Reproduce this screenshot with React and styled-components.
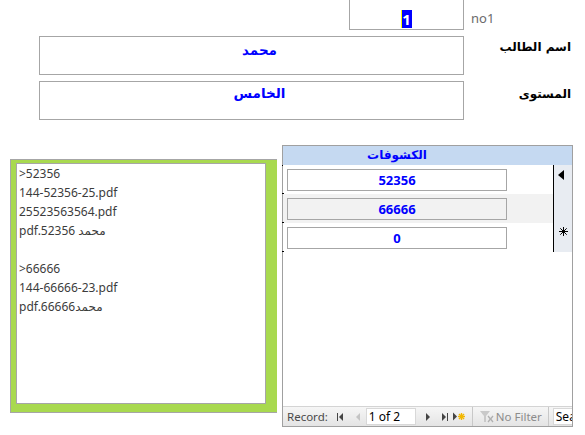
import React from "react";
import styled, { createGlobalStyle } from "styled-components";

const GlobalStyle = createGlobalStyle`
    html, body {
        margin: 0;
        padding: 0;
        background: #ffffff;
    }
`;

const Page = styled.div`
    width: 585px;
    height: 435px;
    overflow: hidden;
    background: #ffffff;
    font-family: "Noto Sans", "DejaVu Sans", sans-serif;
    display: flex;
    flex-direction: column;
`;

const FieldRow = styled.div`
    display: flex;
    align-items: flex-start;
    padding-left: ${props => props.$left}px;
    margin-top: ${props => props.$top}px;
`;

const FieldBox = styled.div`
    box-sizing: border-box;
    width: ${props => props.$width}px;
    height: ${props => props.$height}px;
    border: 1px solid #a6a6a6;
    text-align: center;
    padding-top: ${props => props.$pad}px;
    padding-left: ${props => props.$shift || 0}px;
    font-family: "DejaVu Sans", sans-serif;
    font-weight: bold;
    font-size: 13.5px;
    line-height: 18px;
    color: #0000ff;
`;

const Selected = styled.span`
    display: inline-block;
    background: #0000ff;
    color: #ffffff;
    border-left: 1px solid #ffff00;
    padding: 0 1px 0 0;
    font-family: "Noto Sans", sans-serif;
    font-weight: bold;
    font-size: 15px;
    line-height: 18px;
`;

const Caption = styled.div`
    margin-top: ${props => props.$top}px;
    margin-left: 7px;
    font-size: 13px;
    line-height: 16px;
    color: #6b6b6b;
`;

const ArabicLabel = styled.div`
    flex: 1;
    text-align: right;
    padding-right: 14px;
    margin-top: ${props => props.$top}px;
    font-family: "DejaVu Sans", sans-serif;
    font-weight: bold;
    font-size: 12px;
    line-height: 16px;
    color: #000000;
    direction: rtl;
`;

const Lower = styled.div`
    display: flex;
    align-items: flex-start;
    margin-top: 25px;
`;

const Memo = styled.div`
    box-sizing: border-box;
    margin-left: 10px;
    margin-top: 14px;
    width: 267px;
    height: 254px;
    border: 1px solid #a6a6a6;
    border-right: none;
    background: #a8d94f;
    padding: 3px 11px 8px 5px;
`;

const MemoInner = styled.div`
    box-sizing: border-box;
    height: 100%;
    background: #ffffff;
    border: 1px solid #a6a6a6;
    padding: 0 2px;
    font-size: 12px;
    line-height: 19px;
    color: #3c3c3c;
    white-space: pre;
`;

const Subform = styled.div`
    box-sizing: border-box;
    margin-left: 5px;
    width: 291px;
    height: 282px;
    border: 1px solid #a0a0a0;
    display: flex;
    flex-direction: column;
`;

const SubHeader = styled.div`
    height: 19px;
    background: #c5d9f1;
    display: flex;
`;

const HeaderTitle = styled.div`
    width: 220px;
    margin-left: 4px;
    text-align: center;
    font-family: "DejaVu Sans", sans-serif;
    font-weight: bold;
    font-size: 12px;
    line-height: 18px;
    color: #0000ff;
    direction: rtl;
`;

const SubBody = styled.div`
    display: flex;
    align-items: flex-start;
`;

const RowList = styled.div`
    flex: 1;
    position: relative;
    &::before {
        content: "";
        position: absolute;
        left: -1px;
        top: 0;
        width: 19px;
        height: 1px;
        background: #000000;
    }
`;

const Row = styled.div`
    position: relative;
    height: 29px;
    background: ${props => (props.$shade ? "#f2f2f2" : "#ffffff")};
    &::after {
        content: "";
        position: absolute;
        left: -1px;
        bottom: 0;
        width: 2px;
        height: 1px;
        background: #000000;
    }
`;

const Cell = styled.div`
    box-sizing: border-box;
    margin-left: 4px;
    position: relative;
    top: 4px;
    width: 220px;
    height: 22px;
    border: 1px solid #a6a6a6;
    text-align: center;
    font-weight: bold;
    font-size: 13px;
    line-height: 20px;
    color: #0000ff;
`;

const Selector = styled.div`
    width: 18px;
    border-left: 1px solid #000000;
    background: #e8ecf2;
`;

const SelectorCell = styled.div`
    height: 29px;
    display: flex;
    align-items: flex-start;
    padding: ${props => props.$pad};
    box-sizing: border-box;
`;

const Filler = styled.div`
    flex: 1;
`;

const NavBar = styled.div`
    height: 19px;
    border-top: 1px solid #d4d4d4;
    background: linear-gradient(#f6f6f6, #e4e4e4);
    display: flex;
    align-items: center;
    padding-left: 4px;
    font-size: 11.5px;
    color: #4a4a4a;
    overflow: hidden;
`;

const NavText = styled.span`
    color: ${props => props.$color || "#4a4a4a"};
    margin-left: ${props => props.$left || 0}px;
    white-space: nowrap;
`;

const NavIcon = styled.svg`
    flex: none;
    margin-left: ${props => props.$left}px;
`;

const NavInput = styled.div`
    box-sizing: border-box;
    flex: none;
    width: ${props => props.$width}px;
    height: 17px;
    margin-left: ${props => props.$left}px;
    background: #ffffff;
    border: 1px solid #d8d8d8;
    padding-left: 2px;
    font-size: 12px;
    line-height: 15px;
    color: #000000;
    overflow: hidden;
    white-space: nowrap;
`;

const NavDivider = styled.div`
    flex: none;
    width: 1px;
    height: 19px;
    margin-left: ${props => props.$left}px;
    background: #c8c8c8;
`;

const memoText = `>52356
144-52356-25.pdf
25523563564.pdf
pdf.52356 محمد

>66666
144-66666-23.pdf
pdf.66666محمد`;

const records = [
    { id: "52356", shade: false },
    { id: "66666", shade: true },
    { id: "0", shade: false },
];

export default function App() {
    return (
        <Page>
            <GlobalStyle />
            <FieldRow $left={349} $top={-1}>
                <FieldBox $width={115} $height={31} $pad={10}>
                    <Selected>1</Selected>
                </FieldBox>
                <Caption $top={11}>no1</Caption>
            </FieldRow>
            <FieldRow $left={39} $top={6}>
                <FieldBox $width={425} $height={39} $pad={4} $shift={16}>
                    محمد
                </FieldBox>
                <ArabicLabel $top={3}>اسم الطالب</ArabicLabel>
            </FieldRow>
            <FieldRow $left={39} $top={6}>
                <FieldBox $width={425} $height={39} $pad={2} $shift={16}>
                    الخامس
                </FieldBox>
                <ArabicLabel $top={5}>المستوى</ArabicLabel>
            </FieldRow>

            <Lower>
                <Memo>
                    <MemoInner>{memoText}</MemoInner>
                </Memo>
                <Subform>
                    <SubHeader>
                        <HeaderTitle>الكشوفات</HeaderTitle>
                    </SubHeader>
                    <SubBody>
                        <RowList>
                            {records.map(r => (
                                <Row key={r.id} $shade={r.shade}>
                                    <Cell>{r.id}</Cell>
                                </Row>
                            ))}
                        </RowList>
                        <Selector>
                            <SelectorCell $pad="5px 0 0 4px">
                                <svg width="6" height="10" viewBox="0 0 6 10">
                                    <polygon points="6,0 6,10 0,5" fill="#000" />
                                </svg>
                            </SelectorCell>
                            <SelectorCell $pad="0" />
                            <SelectorCell $pad="4px 0 0 5px">
                                <svg width="9" height="9" viewBox="0 0 9 9">
                                    <g stroke="#000" strokeWidth="1">
                                        <line x1="4.5" y1="0" x2="4.5" y2="9" />
                                        <line x1="0" y1="4.5" x2="9" y2="4.5" />
                                        <line x1="1.3" y1="1.3" x2="7.7" y2="7.7" />
                                        <line x1="7.7" y1="1.3" x2="1.3" y2="7.7" />
                                    </g>
                                </svg>
                            </SelectorCell>
                        </Selector>
                    </SubBody>
                    <Filler />
                    <NavBar>
                        <NavText>Record:</NavText>
                        <NavIcon $left={9} width="6" height="8" viewBox="0 0 6 8">
                            <rect x="0" y="0" width="1" height="8" fill="#444" />
                            <polygon points="6,0 6,8 2,4" fill="#444" />
                        </NavIcon>
                        <NavIcon $left={13} width="4" height="8" viewBox="0 0 4 8">
                            <polygon points="4,0 4,8 0,4" fill="#c4c4c4" />
                        </NavIcon>
                        <NavInput $left={6} $width={50}>1 of 2</NavInput>
                        <NavIcon $left={10} width="4" height="8" viewBox="0 0 4 8">
                            <polygon points="0,0 0,8 4,4" fill="#444" />
                        </NavIcon>
                        <NavIcon $left={12} width="6" height="8" viewBox="0 0 6 8">
                            <polygon points="0,0 0,8 4,4" fill="#444" />
                            <rect x="5" y="0" width="1" height="8" fill="#444" />
                        </NavIcon>
                        <NavIcon $left={5} width="12" height="9" viewBox="0 0 12 9">
                            <polygon points="0,0.5 0,8.5 4,4.5" fill="#444" />
                            <g stroke="#f2b700" strokeWidth="1.4">
                                <line x1="8.5" y1="1" x2="8.5" y2="8" />
                                <line x1="5" y1="4.5" x2="12" y2="4.5" />
                                <line x1="6" y1="2" x2="11" y2="7" />
                                <line x1="11" y1="2" x2="6" y2="7" />
                            </g>
                        </NavIcon>
                        <NavDivider $left={7} />
                        <NavIcon $left={7} width="14" height="12" viewBox="0 0 14 12">
                            <polygon points="0,0 10,0 6,5 6,11 4,11 4,5" fill="#c9c9c9" />
                            <g stroke="#b0b0b0" strokeWidth="1.3">
                                <line x1="8" y1="5" x2="13" y2="11" />
                                <line x1="13" y1="5" x2="8" y2="11" />
                            </g>
                        </NavIcon>
                        <NavText $left={2} $color="#8c8c8c">No Filter</NavText>
                        <NavDivider $left={6} />
                        <NavInput $left={4} $width={30}>Search</NavInput>
                    </NavBar>
                </Subform>
            </Lower>
        </Page>
    );
}
